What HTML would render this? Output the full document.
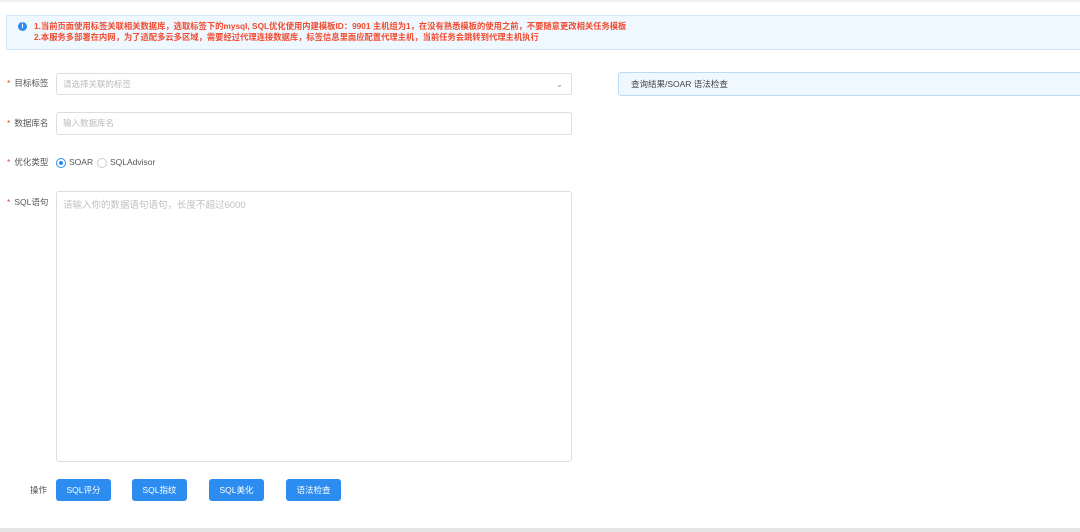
<!DOCTYPE html>
<html><head><meta charset="utf-8"><style>
*{box-sizing:border-box;margin:0;padding:0}
body{width:1080px;height:532px;background:#fff;font-family:"Liberation Sans","Noto Sans CJK SC",sans-serif;position:relative;overflow:hidden;font-size:9px;color:#555}
.a{position:absolute}
.topline{left:0;top:0;width:1080px;height:2px;background:#f0f0f0}
.alert{left:6px;top:15px;width:1080px;height:35px;background:#f0f8ff;border:1px solid #cfe6fb;border-radius:2px}
.alert .t{position:absolute;left:27px;color:#f04a2f;font-size:8.3px;line-height:11px;white-space:nowrap;font-weight:bold}
.ic{left:11px;top:6px;width:9px;height:9px;border-radius:50%;background:#2d8cf0;color:#fff;font-size:7px;text-align:center;line-height:9px;font-weight:bold}
.lbl{font-size:8.5px;color:#555;white-space:nowrap}
.lbl b{color:#f04134;font-weight:normal;margin-right:4px}
.inp{border:1px solid #dcdee2;border-radius:3px;background:#fff;color:#bbb;font-size:8.5px;padding-left:6px;white-space:nowrap}
.btn{top:479px;width:55px;height:22px;background:#2d8cf0;border-radius:3px;color:#fff;font-size:8.5px;text-align:center;line-height:22px}
.radio{width:10px;height:10px;border-radius:50%;border:1px solid #ccc}
</style></head><body>
<div class="a topline"></div>
<div class="a alert">
 <div class="a ic">i</div>
 <div class="t" style="top:5px">1.当前页面使用标签关联相关数据库，选取标签下的mysql, SQL优化使用内建模板ID：9901 主机组为1，在没有熟悉模板的使用之前，不要随意更改相关任务模板</div>
 <div class="t" style="top:16px">2.本服务多部署在内网，为了适配多云多区域，需要经过代理连接数据库，标签信息里面应配置代理主机，当前任务会跳转到代理主机执行</div>
</div>
<div class="a lbl" style="left:7px;top:77px"><b>*</b>目标标签</div>
<div class="a inp" style="left:56px;top:73px;width:516px;height:22px;line-height:20px">请选择关联的标签<span style="position:absolute;right:8px;top:0;color:#999">&#8964;</span></div>
<div class="a" style="left:618px;top:72px;width:470px;height:24px;background:#f0f8ff;border:1px solid #b8dcf8;border-radius:3px;font-size:8.5px;color:#444;line-height:22px;padding-left:12px">查询结果/SOAR 语法检查</div>
<div class="a lbl" style="left:7px;top:117px"><b>*</b>数据库名</div>
<div class="a inp" style="left:56px;top:112px;width:516px;height:23px;line-height:21px">输入数据库名</div>
<div class="a lbl" style="left:7px;top:156px"><b>*</b>优化类型</div>
<div class="a radio" style="left:56px;top:158px;border:1px solid #2d8cf0"><div style="margin:2px;width:4px;height:4px;border-radius:50%;background:#2d8cf0"></div></div>
<div class="a lbl" style="left:69px;top:157px;font-size:8.5px">SOAR</div>
<div class="a radio" style="left:97px;top:158px"></div>
<div class="a lbl" style="left:110px;top:157px;font-size:8.5px">SQLAdvisor</div>
<div class="a lbl" style="left:7px;top:196px"><b>*</b>SQL语句</div>
<div class="a inp" style="left:56px;top:191px;width:516px;height:271px;padding-top:5px;font-size:9.5px;color:#c0c0c0">请输入你的数据语句语句，长度不超过6000</div>
<div class="a lbl" style="left:30px;top:484px">操作</div>
<div class="a btn" style="left:56px">SQL评分</div>
<div class="a btn" style="left:132px">SQL指纹</div>
<div class="a btn" style="left:209px">SQL美化</div>
<div class="a btn" style="left:286px">语法检查</div>
<div class="a" style="left:0;top:528px;width:1080px;height:4px;background:#e4e4e4"></div>
</body></html>
